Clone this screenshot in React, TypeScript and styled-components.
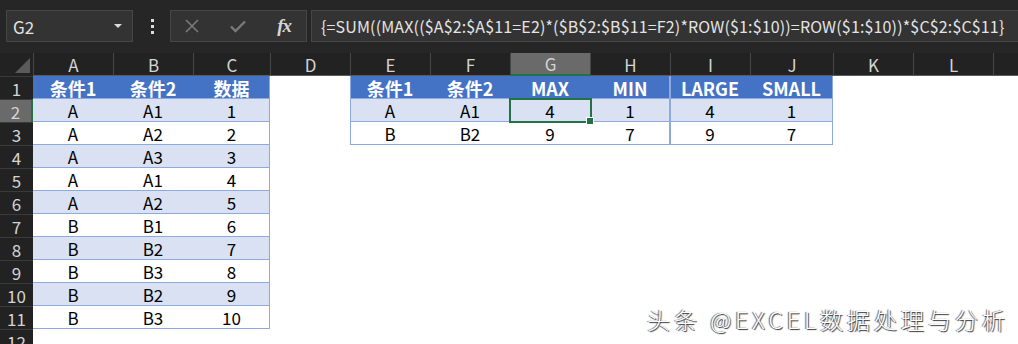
import styled, { createGlobalStyle } from 'styled-components';

const GlobalStyle = createGlobalStyle`
  html, body {
    margin: 0;
    padding: 0;
    background: #ffffff;
  }
  body {
    width: 1018px;
    height: 344px;
    overflow: hidden;
    font-family: "Noto Sans CJK SC", "Noto Sans", sans-serif;
  }
`;

const FORMULA = '{=SUM((MAX(($A$2:$A$11=E2)*($B$2:$B$11=F2)*ROW($1:$10))=ROW($1:$10))*$C$2:$C$11}';

const columns = ['A', 'B', 'C', 'D', 'E', 'F', 'G', 'H', 'I', 'J', 'K', 'L', 'M'];
const widths = [80, 80, 77, 80, 80, 80, 80, 80, 80, 83, 80, 80, 80];

const data: string[][] = [
  ['条件1', '条件2', '数据', '', '条件1', '条件2', 'MAX', 'MIN', 'LARGE', 'SMALL'],
  ['A', 'A1', '1', '', 'A', 'A1', '4', '1', '4', '1'],
  ['A', 'A2', '2', '', 'B', 'B2', '9', '7', '9', '7'],
  ['A', 'A3', '3'],
  ['A', 'A1', '4'],
  ['A', 'A2', '5'],
  ['B', 'B1', '6'],
  ['B', 'B2', '7'],
  ['B', 'B3', '8'],
  ['B', 'B2', '9'],
  ['B', 'B3', '10'],
  [],
];

type Kind = 'head' | 'band' | 'plain' | 'blank';

// tables: [firstCol, lastCol, lastRow]
const tables = [
  [0, 2, 11],
  [4, 7, 3],
  [8, 9, 3],
];

const cellInfo = (c: number, r: number) => {
  const t = tables.find(([a, b, last]) => c >= a && c <= b && r <= last);
  if (!t) return { kind: 'blank' as Kind, right: false, left: false, bottom: false };
  const kind: Kind = r === 1 ? 'head' : r % 2 === 0 ? 'band' : 'plain';
  return { kind, right: c === t[1], left: c === t[0] && c !== 0, bottom: true };
};

const Page = styled.div`
  position: relative;
  width: 1018px;
  height: 344px;
  overflow: hidden;
  background: #ffffff;
`;

const Toolbar = styled.div`
  height: 53px;
  box-sizing: border-box;
  padding: 10px 0 0 6px;
  display: flex;
  align-items: flex-start;
  background: #262626;
  overflow: hidden;
`;

const Box = styled.div<{ $w?: number }>`
  height: 32px;
  box-sizing: border-box;
  background: #333333;
  border: 1px solid #464646;
  display: flex;
  align-items: center;
  flex: ${(p) => (p.$w ? `0 0 ${p.$w}px` : '1 0 auto')};
`;

const NameBox = styled(Box)`
  padding: 0 10px 0 6px;
  justify-content: space-between;
  color: #e2e2e2;
  font-size: 17px;
`;

const Caret = styled.span`
  width: 0;
  height: 0;
  border-left: 4px solid transparent;
  border-right: 4px solid transparent;
  border-top: 4px solid #dcdcdc;
`;

const Kebab = styled.div`
  width: 37px;
  height: 32px;
  display: flex;
  flex-direction: column;
  align-items: center;
  justify-content: center;
  gap: 3px;
  padding-left: 2px;
  box-sizing: border-box;
`;

const Dot = styled.span`
  width: 3px;
  height: 3px;
  background: #dddddd;
`;

const Buttons = styled(Box)`
  justify-content: space-between;
  padding: 0 15px 0 14px;
  margin-right: 4px;
`;

const Fx = styled.span`
  font-family: "Liberation Serif", serif;
  font-style: italic;
  font-weight: 700;
  font-size: 19px;
  color: #d6d6d6;
  letter-spacing: -1px;
`;

const FormulaBox = styled(Box)`
  padding-left: 9px;
  color: #e4e4e4;
  font-size: 16px;
  letter-spacing: 0.15px;
  white-space: nowrap;
  border-right: none;
`;

const Grid = styled.div`
  display: grid;
  grid-template-columns: 33px ${widths.map((w) => `${w}px`).join(' ')};
  grid-auto-rows: 23px;
`;

const Corner = styled.div`
  background: #222222;
  position: relative;
  &::after {
    content: '';
    position: absolute;
    right: 3px;
    bottom: 3px;
    width: 0;
    height: 0;
    border-left: 15px solid transparent;
    border-bottom: 15px solid #5a5a5a;
  }
`;

const ColHead = styled.div<{ $sel?: boolean }>`
  background: ${(p) => (p.$sel ? '#6a6a6a' : '#222222')};
  color: #d4d4d4;
  font-size: 17px;
  display: flex;
  align-items: center;
  justify-content: center;
  box-sizing: border-box;
  border-left: 1px solid #464646;
  border-bottom: ${(p) => (p.$sel ? '2px solid #217346' : '1px solid #5c5c5c')};
  line-height: 1;
`;

const RowHead = styled.div<{ $sel?: boolean }>`
  background: ${(p) => (p.$sel ? '#6a6a6a' : '#222222')};
  color: #d4d4d4;
  font-size: 17px;
  display: flex;
  align-items: center;
  justify-content: center;
  box-sizing: border-box;
  border-top: 1px solid #3a3a3a;
  border-right: ${(p) => (p.$sel ? '2px solid #217346' : 'none')};
  line-height: 1;
`;

const fills: Record<Kind, string> = {
  head: '#4472c4',
  band: '#d9e1f2',
  plain: '#ffffff',
  blank: '#ffffff',
};

const Cell = styled.div<{ $kind: Kind; $r: boolean; $l: boolean; $b: boolean }>`
  position: relative;
  background: ${(p) => fills[p.$kind]};
  color: ${(p) => (p.$kind === 'head' ? '#ffffff' : '#000000')};
  font-weight: ${(p) => (p.$kind === 'head' ? 700 : 400)};
  font-size: ${(p) => (p.$kind === 'head' ? '18px' : '17px')};
  display: flex;
  align-items: center;
  justify-content: center;
  line-height: 1;
  box-shadow: ${(p) =>
    [
      p.$b ? 'inset 0 -1px #8ea9db' : '',
      p.$r ? 'inset -1px 0 #8ea9db' : '',
      p.$l ? 'inset 1px 0 #8ea9db' : '',
    ]
      .filter(Boolean)
      .join(', ') || 'none'};
`;

const Selection = styled.div`
  position: absolute;
  left: -1px;
  top: -1px;
  right: -2px;
  bottom: -1px;
  border: 2px solid #217346;
  z-index: 2;
`;

const Handle = styled.span`
  position: absolute;
  right: -4px;
  bottom: -4px;
  width: 6px;
  height: 6px;
  background: #217346;
  border: 1px solid #ffffff;
`;

const Watermark = styled.div`
  position: absolute;
  right: 9px;
  bottom: 13px;
  color: #ffffff;
  font-family: "Noto Sans CJK SC", "Liberation Sans", sans-serif;
  font-size: 23px;
  font-weight: 300;
  letter-spacing: 4px;
  line-height: 1;
  text-shadow: 1px 1px 1px #333, -1px 0 1px #555;
  z-index: 3;
`;

const XIcon = () => (
  <svg width="14" height="14" viewBox="0 0 14 14">
    <path d="M1 1 L13 13 M13 1 L1 13" stroke="#7a7a7a" strokeWidth="1.6" fill="none" />
  </svg>
);

const CheckIcon = () => (
  <svg width="16" height="13" viewBox="0 0 16 13">
    <path d="M1 6.5 L5.5 11 L15 1.5" stroke="#7a7a7a" strokeWidth="2.4" fill="none" />
  </svg>
);

export default function App() {
  return (
    <Page>
      <GlobalStyle />
      <Toolbar>
        <NameBox $w={127}>
          <span>G2</span>
          <Caret />
        </NameBox>
        <Kebab>
          <Dot />
          <Dot />
          <Dot />
        </Kebab>
        <Buttons $w={137}>
          <XIcon />
          <CheckIcon />
          <Fx>fx</Fx>
        </Buttons>
        <FormulaBox>{FORMULA}</FormulaBox>
      </Toolbar>
      <Grid>
        <Corner />
        {columns.map((c) => (
          <ColHead key={c} $sel={c === 'G'}>
            {c}
          </ColHead>
        ))}
        {data.map((row, ri) => {
          const r = ri + 1;
          return [
            <RowHead key={`h${r}`} $sel={r === 2}>
              {r}
            </RowHead>,
            ...columns.map((col, ci) => {
              const info = cellInfo(ci, r);
              const sel = col === 'G' && r === 2;
              return (
                <Cell
                  key={`${col}${r}`}
                  $kind={info.kind}
                  $r={info.right}
                  $l={info.left}
                  $b={info.bottom}
                >
                  {row[ci] ?? ''}
                  {sel && (
                    <Selection>
                      <Handle />
                    </Selection>
                  )}
                </Cell>
              );
            }),
          ];
        })}
      </Grid>
      <Watermark>头条 @EXCEL数据处理与分析</Watermark>
    </Page>
  );
}
